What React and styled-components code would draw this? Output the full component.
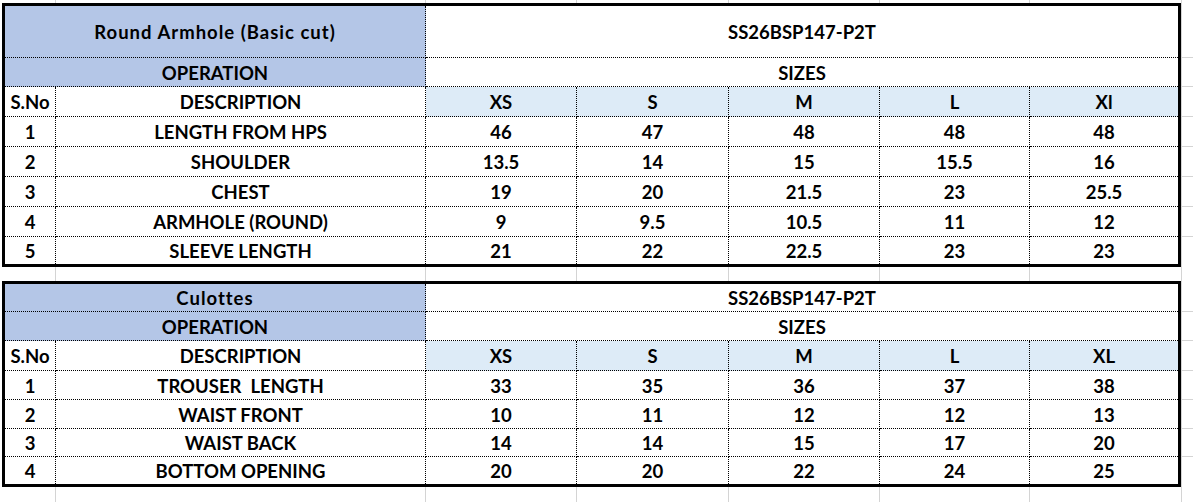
import styled, { createGlobalStyle } from "styled-components";

const GlobalStyle = createGlobalStyle`
  html, body {
    margin: 0;
    padding: 0;
    background: #ffffff;
  }
  body {
    font-family: Lato, "Open Sans", sans-serif;
    color: #000;
  }
  * {
    box-sizing: border-box;
  }
`;

const GRID_LINE = "#d4d4d4";
const HEADER_BLUE = "#b4c6e7";
const SIZE_BLUE = "#ddebf7";

// sheet column widths measured from the gridlines (each includes its right line)
const STRIP_COLS = "56px 370px 151px 152px 151px 150px 152px 1fr";
const TABLE_COLS = "51px 370px 151px 152px 151px 150px 148px";

const Page = styled.div`
  width: 1193px;
  height: 502px;
  overflow: hidden;
  display: flex;
  flex-direction: column;
`;

const Strip = styled.div`
  height: ${(p) => p.$h}px;
  flex: ${(p) => (p.$grow ? 1 : "none")};
  display: grid;
  grid-template-columns: ${STRIP_COLS};
`;

const StripCell = styled.div`
  border-right: ${(p) => (p.$last ? "none" : `1px solid ${GRID_LINE}`)};
`;

const Band = styled.div`
  display: flex;
  align-items: stretch;
`;

const LeftPad = styled.div`
  width: 2px;
  flex: none;
`;

const Frame = styled.div`
  width: 1179px;
  flex: none;
  border: 3px solid #000;
  display: grid;
  grid-template-columns: ${TABLE_COLS};
  grid-template-rows: ${(p) => p.$rows};
`;

const Cell = styled.div`
  grid-column: span ${(p) => p.$span || 1};
  background: ${(p) => p.$bg || "#ffffff"};
  border-right: ${(p) => (p.$lastCol ? "none" : "1px dotted #000")};
  border-bottom: ${(p) => (p.$lastRow ? "none" : "1px dotted #000")};
  display: flex;
  align-items: center;
  justify-content: center;
  font-weight: 700;
  font-size: 18.5px;
  letter-spacing: ${(p) => (p.$wide ? "1px" : "0")};
  line-height: 1;
  white-space: pre;
  padding-top: 2px;
`;

const Gutter = styled.div`
  flex: 1;
  display: flex;
  flex-direction: column;
  border-left: 1px solid ${GRID_LINE};
`;

const GutterCell = styled.div`
  height: ${(p) => p.$h}px;
  flex: none;
  border-bottom: ${(p) => (p.$last ? "none" : `1px solid ${GRID_LINE}`)};
`;

const GridStrip = ({ h, grow }) => (
  <Strip $h={h} $grow={grow}>
    {Array.from({ length: 8 }).map((_, i) => (
      <StripCell key={i} $last={i === 7} />
    ))}
  </Strip>
);

const SizeTable = ({ title, code, sizes, rows, rowHeights }) => {
  const gutter = rowHeights.map((h, i) =>
    i === 0 ? h + 3 : i === rowHeights.length - 1 ? h + 3 : h
  );
  return (
    <Band>
      <LeftPad />
      <Frame $rows={rowHeights.map((h) => `${h}px`).join(" ")}>
        <Cell $span={2} $bg={HEADER_BLUE} $wide>
          {title}
        </Cell>
        <Cell $span={5} $lastCol>
          {code}
        </Cell>

        <Cell $span={2} $bg={HEADER_BLUE}>
          OPERATION
        </Cell>
        <Cell $span={5} $lastCol>
          SIZES
        </Cell>

        <Cell>S.No</Cell>
        <Cell>DESCRIPTION</Cell>
        {sizes.map((s, i) => (
          <Cell key={s} $bg={SIZE_BLUE} $lastCol={i === sizes.length - 1}>
            {s}
          </Cell>
        ))}

        {rows.map((r, ri) => {
          const isLast = ri === rows.length - 1;
          return [
            <Cell key={`n${ri}`} $lastRow={isLast}>
              {ri + 1}
            </Cell>,
            <Cell key={`d${ri}`} $lastRow={isLast}>
              {r.label}
            </Cell>,
            ...r.values.map((v, vi) => (
              <Cell
                key={`v${ri}-${vi}`}
                $lastRow={isLast}
                $lastCol={vi === r.values.length - 1}
              >
                {v}
              </Cell>
            )),
          ];
        })}
      </Frame>
      <Gutter>
        {gutter.map((h, i) => (
          <GutterCell key={i} $h={h} $last={i === gutter.length - 1} />
        ))}
      </Gutter>
    </Band>
  );
};

const topRows = [
  { label: "LENGTH FROM HPS", values: ["46", "47", "48", "48", "48"] },
  { label: "SHOULDER", values: ["13.5", "14", "15", "15.5", "16"] },
  { label: "CHEST", values: ["19", "20", "21.5", "23", "25.5"] },
  { label: "ARMHOLE (ROUND)", values: ["9", "9.5", "10.5", "11", "12"] },
  { label: "SLEEVE LENGTH", values: ["21", "22", "22.5", "23", "23"] },
];

const bottomRows = [
  { label: "TROUSER  LENGTH", values: ["33", "35", "36", "37", "38"] },
  { label: "WAIST FRONT", values: ["10", "11", "12", "12", "13"] },
  { label: "WAIST BACK", values: ["14", "14", "15", "17", "20"] },
  { label: "BOTTOM OPENING", values: ["20", "20", "22", "24", "25"] },
];

export default function App() {
  return (
    <>
      <GlobalStyle />
      <Page>
        <GridStrip h={3} />
        <SizeTable
          title="Round Armhole (Basic cut)"
          code="SS26BSP147-P2T"
          sizes={["XS", "S", "M", "L", "Xl"]}
          rows={topRows}
          rowHeights={[52, 29, 30, 30, 30, 30, 30, 27]}
        />
        <GridStrip h={14} />
        <SizeTable
          title="Culottes"
          code="SS26BSP147-P2T"
          sizes={["XS", "S", "M", "L", "XL"]}
          rows={bottomRows}
          rowHeights={[28, 29, 30, 29, 29, 28, 27]}
        />
        <GridStrip grow />
      </Page>
    </>
  );
}
